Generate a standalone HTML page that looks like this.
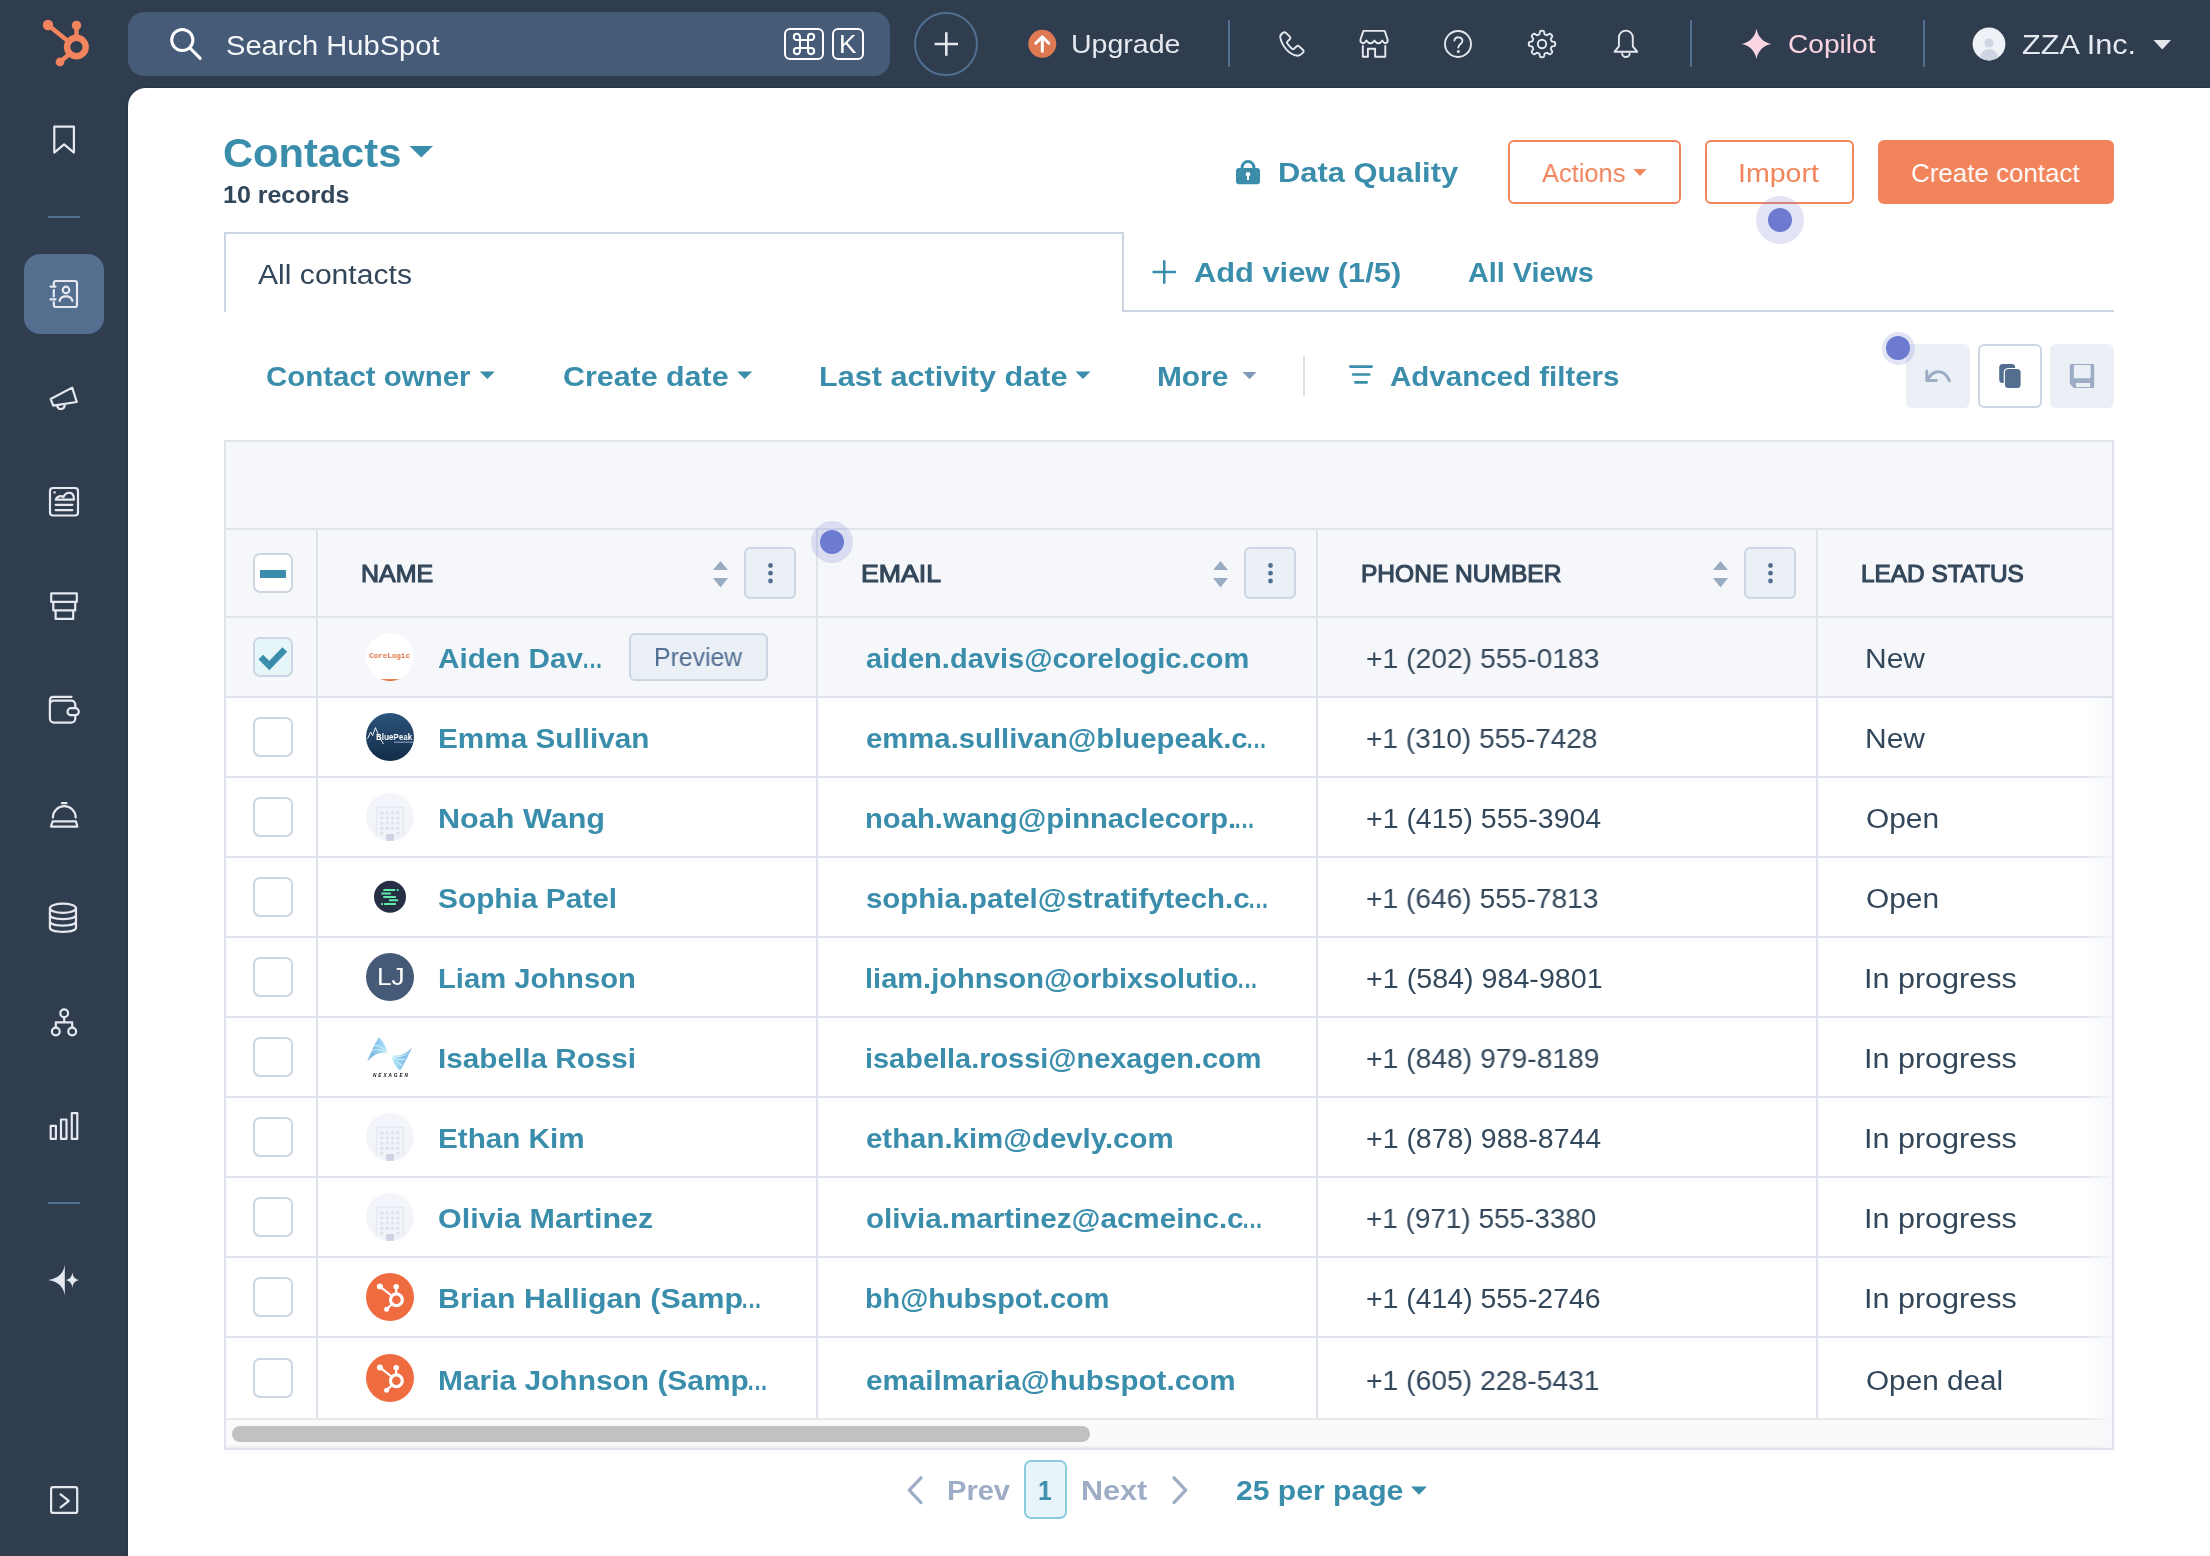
<!DOCTYPE html>
<html lang="en"><head><meta charset="utf-8"><title>Contacts</title>
<style>
html,body{margin:0;padding:0}
body{width:2210px;height:1556px;position:relative;overflow:hidden;background:#303d4f;font-family:"Liberation Sans",sans-serif}
.t{position:absolute;white-space:nowrap;line-height:1;transform-origin:0 0;will-change:transform}
.a{position:absolute;box-sizing:border-box}
svg{position:absolute;left:0;top:0;overflow:visible}
</style></head><body>
<div class="a" style="left:128px;top:88px;width:2082px;height:1468px;background:#fff;border-top-left-radius:18px;box-shadow:0 0 2px rgba(10,20,35,.5)"></div>
<div class="a" style="left:128px;top:12px;width:762px;height:64px;background:#465b77;border-radius:16px"></div>
<div class="a" style="left:784px;top:28px;width:40px;height:32px;border:2px solid #fff;border-radius:6px"></div>
<div class="a" style="left:832px;top:28px;width:32px;height:32px;border:2px solid #fff;border-radius:6px"></div>
<div class="a" style="left:914px;top:12px;width:64px;height:64px;border:2px solid #516f90;border-radius:50%"></div>
<div class="a" style="left:1228px;top:20px;width:2px;height:47px;background:#516f90"></div>
<div class="a" style="left:1690px;top:20px;width:2px;height:47px;background:#516f90"></div>
<div class="a" style="left:1923px;top:20px;width:2px;height:47px;background:#516f90"></div>
<div class="a" style="left:48px;top:216px;width:32px;height:2px;background:#516f90"></div>
<div class="a" style="left:48px;top:1202px;width:32px;height:2px;background:#516f90"></div>
<div class="a" style="left:24px;top:254px;width:80px;height:80px;background:#546e90;border-radius:16px"></div>
<div class="a" style="left:1508px;top:140px;width:173px;height:64px;border:2px solid #f2845c;border-radius:6px;background:#fff"></div>
<div class="a" style="left:1705px;top:140px;width:149px;height:64px;border:2px solid #f2845c;border-radius:6px;background:#fff"></div>
<div class="a" style="left:1878px;top:140px;width:236px;height:64px;background:#f2845c;border-radius:6px"></div>
<div class="a" style="left:224px;top:232px;width:900px;height:80px;border:2px solid #cbd6e2;border-bottom:none"></div>
<div class="a" style="left:1122px;top:310px;width:992px;height:2px;background:#cbd6e2"></div>
<div class="a" style="left:1303px;top:356px;width:2px;height:40px;background:#dde1eb"></div>
<div class="a" style="left:1906px;top:344px;width:64px;height:64px;background:#ebf0f7;border-radius:6px"></div>
<div class="a" style="left:1978px;top:344px;width:64px;height:64px;background:#fff;border:2px solid #cbd6e2;border-radius:6px"></div>
<div class="a" style="left:2050px;top:344px;width:64px;height:64px;background:#ebf0f7;border-radius:6px"></div>
<div class="a" style="left:224px;top:440px;width:1890px;height:1010px;background:#f6f7fa;border:2px solid #dfe3eb"></div>
<div class="a" style="left:226px;top:618px;width:1886px;height:800px;background:#fff"></div>
<div class="a" style="left:226px;top:618px;width:1886px;height:78px;background:#f6f7fa"></div>
<div class="a" style="left:226px;top:1420px;width:1886px;height:28px;background:#fafafa;border-bottom:2px solid #efefef"></div>
<div class="a" style="left:226px;top:528px;width:1886px;height:2px;background:#dfe3eb"></div>
<div class="a" style="left:226px;top:616px;width:1886px;height:2px;background:#dfe3eb"></div>
<div class="a" style="left:226px;top:696px;width:1886px;height:2px;background:#dfe3eb"></div>
<div class="a" style="left:226px;top:776px;width:1886px;height:2px;background:#dfe3eb"></div>
<div class="a" style="left:226px;top:856px;width:1886px;height:2px;background:#dfe3eb"></div>
<div class="a" style="left:226px;top:936px;width:1886px;height:2px;background:#dfe3eb"></div>
<div class="a" style="left:226px;top:1016px;width:1886px;height:2px;background:#dfe3eb"></div>
<div class="a" style="left:226px;top:1096px;width:1886px;height:2px;background:#dfe3eb"></div>
<div class="a" style="left:226px;top:1176px;width:1886px;height:2px;background:#dfe3eb"></div>
<div class="a" style="left:226px;top:1256px;width:1886px;height:2px;background:#dfe3eb"></div>
<div class="a" style="left:226px;top:1336px;width:1886px;height:2px;background:#dfe3eb"></div>
<div class="a" style="left:226px;top:1418px;width:1886px;height:2px;background:#e8e8e8"></div>
<div class="a" style="left:316px;top:530px;width:2px;height:888px;background:#dfe3eb"></div>
<div class="a" style="left:816px;top:530px;width:2px;height:888px;background:#dfe3eb"></div>
<div class="a" style="left:1316px;top:530px;width:2px;height:888px;background:#dfe3eb"></div>
<div class="a" style="left:1816px;top:530px;width:2px;height:888px;background:#dfe3eb"></div>
<div class="a" style="left:2084px;top:698px;width:28px;height:750px;background:linear-gradient(to right,rgba(246,248,251,0),rgba(246,248,251,1))"></div>
<div class="a" style="left:232px;top:1426px;width:858px;height:16px;background:#c1c1c1;border-radius:8px"></div>
<div class="a" style="left:253px;top:553px;width:40px;height:40px;background:#fff;border:2px solid #cbd6e2;border-radius:7px"></div>
<div class="a" style="left:253px;top:637px;width:40px;height:40px;background:#e5f5f8;border:2px solid #cbd6e2;border-radius:7px"></div>
<div class="a" style="left:253px;top:717px;width:40px;height:40px;background:#fff;border:2px solid #cbd6e2;border-radius:7px"></div>
<div class="a" style="left:253px;top:797px;width:40px;height:40px;background:#fff;border:2px solid #cbd6e2;border-radius:7px"></div>
<div class="a" style="left:253px;top:877px;width:40px;height:40px;background:#fff;border:2px solid #cbd6e2;border-radius:7px"></div>
<div class="a" style="left:253px;top:957px;width:40px;height:40px;background:#fff;border:2px solid #cbd6e2;border-radius:7px"></div>
<div class="a" style="left:253px;top:1037px;width:40px;height:40px;background:#fff;border:2px solid #cbd6e2;border-radius:7px"></div>
<div class="a" style="left:253px;top:1117px;width:40px;height:40px;background:#fff;border:2px solid #cbd6e2;border-radius:7px"></div>
<div class="a" style="left:253px;top:1197px;width:40px;height:40px;background:#fff;border:2px solid #cbd6e2;border-radius:7px"></div>
<div class="a" style="left:253px;top:1277px;width:40px;height:40px;background:#fff;border:2px solid #cbd6e2;border-radius:7px"></div>
<div class="a" style="left:253px;top:1358px;width:40px;height:40px;background:#fff;border:2px solid #cbd6e2;border-radius:7px"></div>
<div class="a" style="left:744px;top:547px;width:52px;height:52px;background:#eaf0f6;border:2px solid #cbd6e2;border-radius:6px"></div>
<div class="a" style="left:1244px;top:547px;width:52px;height:52px;background:#eaf0f6;border:2px solid #cbd6e2;border-radius:6px"></div>
<div class="a" style="left:1744px;top:547px;width:52px;height:52px;background:#eaf0f6;border:2px solid #cbd6e2;border-radius:6px"></div>
<div class="a" style="left:629px;top:633px;width:139px;height:48px;background:#eaf0f6;border:2px solid #cbd6e2;border-radius:6px"></div>
<div class="a" style="left:1024px;top:1460px;width:43px;height:59px;background:#e7f4f9;border:2px solid #8ccbdb;border-radius:7px"></div>
<div class="a" style="left:1755.5px;top:195.5px;width:48px;height:48px;background:rgba(108,122,208,.2);border-radius:50%"></div>
<div class="a" style="left:1767.5px;top:207.5px;width:24px;height:24px;background:#6c7ad0;border-radius:50%"></div>
<div class="a" style="left:1881.5px;top:331.5px;width:33.0px;height:33.0px;background:rgba(108,122,208,.2);border-radius:50%"></div>
<div class="a" style="left:1886px;top:336px;width:24px;height:24px;background:#6c7ad0;border-radius:50%"></div>
<div class="a" style="left:811px;top:521px;width:42px;height:42px;background:rgba(108,122,208,.2);border-radius:50%"></div>
<div class="a" style="left:820px;top:530px;width:24px;height:24px;background:#6c7ad0;border-radius:50%"></div>
<svg width="2210" height="1556" viewBox="0 0 2210 1556" fill="none">
<g stroke="#f2855e" fill="none"><circle cx="76.4" cy="47" r="9.3" stroke-width="6.4"/><path d="M76.5 25.4V38M48 25L68.5 41.5M60 62L69.5 54" stroke-width="4.3"/></g>
<g fill="#f2855e"><circle cx="76.5" cy="25.4" r="4.7"/><circle cx="48" cy="25" r="5.2"/><circle cx="60" cy="62" r="4.4"/></g>
<g stroke="#fff" stroke-width="3" stroke-linecap="round"><circle cx="182.3" cy="40" r="10.6"/><path d="M190.2 48.2L200.2 58.4"/></g>
<path stroke="#fff" stroke-width="2" d="M800 40H808V48H800ZM800 40V36.9A3.1 3.1 0 1 0 796.9 40ZM808 40H811.1A3.1 3.1 0 1 0 808 36.9ZM808 48V51.1A3.1 3.1 0 1 0 811.1 48ZM800 48H796.9A3.1 3.1 0 1 0 800 51.1Z"/>
<path stroke="#e5e8ef" stroke-width="2.6" d="M934.6 44H958M946.3 32.3V55.7"/>
<circle cx="1042.3" cy="43.8" r="14" fill="#de7954"/><path stroke="#fff" stroke-width="3" stroke-linecap="round" stroke-linejoin="round" d="M1042.3 51.3V37.2M1035.8 43.3L1042.3 36.8L1048.8 43.3"/>
<path stroke="#e5e8ef" stroke-width="1.9" stroke-linecap="round" stroke-linejoin="round" d="M1283.2 32.6Q1284.6 31.6 1286 32.9L1289.8 36.6Q1291 37.8 1289.9 39L1287.4 41.6Q1286.5 42.5 1287.3 43.5Q1289.5 46.5 1292 48.7Q1293 49.6 1294 48.8L1296.8 46.2Q1298 45.1 1299.2 46.3L1303 50Q1304.3 51.3 1303.1 52.5Q1300.5 55.5 1297.5 55.7C1290 55 1282 47 1280.2 37.2Q1280 34.8 1283.2 32.6Z"/>
<path stroke="#e5e8ef" stroke-width="1.9" stroke-linecap="round" stroke-linejoin="round" d="M1363.4 30.9H1384.7L1387.6 39.5V41.6Q1385 45.4 1382.4 40.6Q1378.4 46 1374.4 40.6Q1370.4 46 1366.4 40.6Q1363.6 45.4 1360.5 41.6V39.5ZM1362.8 45.9V56.7H1367.9V48.8H1375.1V56.7H1385.3V45.9"/>
<circle cx="1458" cy="44" r="13" stroke="#e5e8ef" stroke-width="1.9" stroke-linecap="round" stroke-linejoin="round"/><path stroke="#e5e8ef" stroke-width="1.9" stroke-linecap="round" stroke-linejoin="round" d="M1454.4 40.6C1454.4 36.2 1462.4 36.2 1462.4 40.8C1462.4 44.2 1458.3 43.8 1458.3 47.6"/><circle cx="1458.3" cy="51.6" r="1.5" fill="#e5e8ef"/>
<path stroke="#e5e8ef" stroke-width="1.9" stroke-linecap="round" stroke-linejoin="round" d="M1555.20 44.00L1555.19 44.35L1555.17 44.69L1555.12 45.03L1555.03 45.37L1554.84 45.69L1554.45 45.97L1553.76 46.18L1552.89 46.32L1552.20 46.45L1551.81 46.63L1551.59 46.84L1551.45 47.07L1551.35 47.31L1551.25 47.55L1551.15 47.79L1551.05 48.03L1550.95 48.27L1550.86 48.51L1550.79 48.77L1550.79 49.08L1550.95 49.48L1551.34 50.07L1551.86 50.78L1552.20 51.41L1552.27 51.88L1552.18 52.24L1552.01 52.55L1551.80 52.82L1551.57 53.08L1551.33 53.33L1551.08 53.57L1550.82 53.80L1550.55 54.01L1550.24 54.18L1549.88 54.27L1549.41 54.20L1548.78 53.86L1548.07 53.34L1547.48 52.95L1547.08 52.79L1546.77 52.79L1546.51 52.86L1546.27 52.95L1546.03 53.05L1545.79 53.15L1545.55 53.25L1545.31 53.35L1545.07 53.45L1544.84 53.59L1544.63 53.81L1544.45 54.20L1544.32 54.89L1544.18 55.76L1543.97 56.45L1543.69 56.84L1543.37 57.03L1543.03 57.12L1542.69 57.17L1542.35 57.19L1542.00 57.20L1541.65 57.19L1541.31 57.17L1540.97 57.12L1540.63 57.03L1540.31 56.84L1540.03 56.45L1539.82 55.76L1539.68 54.89L1539.55 54.20L1539.37 53.81L1539.16 53.59L1538.93 53.45L1538.69 53.35L1538.45 53.25L1538.21 53.15L1537.97 53.05L1537.73 52.95L1537.49 52.86L1537.23 52.79L1536.92 52.79L1536.52 52.95L1535.93 53.34L1535.22 53.86L1534.59 54.20L1534.12 54.27L1533.76 54.18L1533.45 54.01L1533.18 53.80L1532.92 53.57L1532.67 53.33L1532.43 53.08L1532.20 52.82L1531.99 52.55L1531.82 52.24L1531.73 51.88L1531.80 51.41L1532.14 50.78L1532.66 50.07L1533.05 49.48L1533.21 49.08L1533.21 48.77L1533.14 48.51L1533.05 48.27L1532.95 48.03L1532.85 47.79L1532.75 47.55L1532.65 47.31L1532.55 47.07L1532.41 46.84L1532.19 46.63L1531.80 46.45L1531.11 46.32L1530.24 46.18L1529.55 45.97L1529.16 45.69L1528.97 45.37L1528.88 45.03L1528.83 44.69L1528.81 44.35L1528.80 44.00L1528.81 43.65L1528.83 43.31L1528.88 42.97L1528.97 42.63L1529.16 42.31L1529.55 42.03L1530.24 41.82L1531.11 41.68L1531.80 41.55L1532.19 41.37L1532.41 41.16L1532.55 40.93L1532.65 40.69L1532.75 40.45L1532.85 40.21L1532.95 39.97L1533.05 39.73L1533.14 39.49L1533.21 39.23L1533.21 38.92L1533.05 38.52L1532.66 37.93L1532.14 37.22L1531.80 36.59L1531.73 36.12L1531.82 35.76L1531.99 35.45L1532.20 35.18L1532.43 34.92L1532.67 34.67L1532.92 34.43L1533.18 34.20L1533.45 33.99L1533.76 33.82L1534.12 33.73L1534.59 33.80L1535.22 34.14L1535.93 34.66L1536.52 35.05L1536.92 35.21L1537.23 35.21L1537.49 35.14L1537.73 35.05L1537.97 34.95L1538.21 34.85L1538.45 34.75L1538.69 34.65L1538.93 34.55L1539.16 34.41L1539.37 34.19L1539.55 33.80L1539.68 33.11L1539.82 32.24L1540.03 31.55L1540.31 31.16L1540.63 30.97L1540.97 30.88L1541.31 30.83L1541.65 30.81L1542.00 30.80L1542.35 30.81L1542.69 30.83L1543.03 30.88L1543.37 30.97L1543.69 31.16L1543.97 31.55L1544.18 32.24L1544.32 33.11L1544.45 33.80L1544.63 34.19L1544.84 34.41L1545.07 34.55L1545.31 34.65L1545.55 34.75L1545.79 34.85L1546.03 34.95L1546.27 35.05L1546.51 35.14L1546.77 35.21L1547.08 35.21L1547.48 35.05L1548.07 34.66L1548.78 34.14L1549.41 33.80L1549.88 33.73L1550.24 33.82L1550.55 33.99L1550.82 34.20L1551.08 34.43L1551.33 34.67L1551.57 34.92L1551.80 35.18L1552.01 35.45L1552.18 35.76L1552.27 36.12L1552.20 36.59L1551.86 37.22L1551.34 37.93L1550.95 38.52L1550.79 38.92L1550.79 39.23L1550.86 39.49L1550.95 39.73L1551.05 39.97L1551.15 40.21L1551.25 40.45L1551.35 40.69L1551.45 40.93L1551.59 41.16L1551.81 41.37L1552.20 41.55L1552.89 41.68L1553.76 41.82L1554.45 42.03L1554.84 42.31L1555.03 42.63L1555.12 42.97L1555.17 43.31L1555.19 43.65Z"/><circle cx="1542" cy="44" r="4.2" stroke="#e5e8ef" stroke-width="1.9" stroke-linecap="round" stroke-linejoin="round"/>
<path stroke="#e5e8ef" stroke-width="1.9" stroke-linecap="round" stroke-linejoin="round" d="M1618.9 46.3V37.6A6.95 6.95 0 0 1 1632.8 37.6V46.3L1637.2 51.7H1614.6ZM1622.2 53.8A3.7 3.2 0 0 0 1629.6 53.8"/>
<path fill="#f9d6e2" d="M1756.5 28.8C1758 37 1763.3 42.5 1771.3 44C1763.3 45.5 1758 51 1756.5 59C1755 51 1749.7 45.5 1741.7 44C1749.7 42.5 1755 37 1756.5 28.8Z"/>
<clipPath id="av"><circle cx="1989" cy="44" r="16.4"/></clipPath><circle cx="1989" cy="44" r="16.4" fill="#eef1f6"/><g clip-path="url(#av)" fill="#cdd5e2"><circle cx="1989" cy="43" r="4.5"/><path d="M1979.5 62C1979.5 52.5 1983.5 49.2 1989 49.2C1994.5 49.2 1998.5 52.5 1998.5 62Z"/></g>
<path fill="#e5e8ef" d="M2153.5 40H2171L2162.25 49.5Z"/>
<path stroke="#e5e8ef" stroke-width="2.2" stroke-linecap="round" stroke-linejoin="round" stroke-linejoin="miter" d="M54.3 126.6H73.9V152.6L64.1 144.3L54.3 152.6Z"/>
<path stroke="#e5e8ef" stroke-width="2.2" stroke-linecap="round" stroke-linejoin="round" d="M53.8 285V283A2 2 0 0 1 55.8 281H75A2 2 0 0 1 77 283V305A2 2 0 0 1 75 307H55.8A2 2 0 0 1 53.8 305V302M53.8 290V296.5M50.5 286.6H55.5M50.5 299.4H55.5"/><circle cx="66" cy="290" r="3.3" stroke="#e5e8ef" stroke-width="2.2" stroke-linecap="round" stroke-linejoin="round"/><path stroke="#e5e8ef" stroke-width="2.2" stroke-linecap="round" stroke-linejoin="round" d="M59.6 301C60.5 294.8 71.5 294.8 72.4 301"/>
<path stroke="#e5e8ef" stroke-width="2.2" stroke-linecap="round" stroke-linejoin="round" d="M50.7 399L72.2 387.6L76.8 402L53.2 405.6ZM57.3 405.4C57.3 410.2 64.3 410.6 64.9 404.3"/>
<rect x="50" y="488" width="28" height="27.5" rx="3" stroke="#e5e8ef" stroke-width="2.2" stroke-linecap="round" stroke-linejoin="round"/><circle cx="54.6" cy="492.4" r="1.2" fill="#e5e8ef"/><path stroke="#e5e8ef" stroke-width="2.2" stroke-linecap="round" stroke-linejoin="round" stroke-width="2" d="M55.6 499.6C57 496 61 495.4 63.5 497C65 493.6 68 492.6 70 492.8C73 493.2 74 496 74 499.6ZM55.6 504.8H72.4M55.6 510.1H72.4"/>
<path stroke="#e5e8ef" stroke-width="2.2" stroke-linecap="round" stroke-linejoin="round" stroke-linejoin="miter" d="M51.2 593.3H76.8V601.8H51.2ZM53.3 601.8H75.2V610.4H53.3ZM55.6 610.4H73.2V618.9H55.6Z"/>
<rect x="49.9" y="700.6" width="25.4" height="22" rx="4" stroke="#e5e8ef" stroke-width="2.2" stroke-linecap="round" stroke-linejoin="round"/><path stroke="#e5e8ef" stroke-width="2.2" stroke-linecap="round" stroke-linejoin="round" d="M49.9 704V700A3.4 3.4 0 0 1 53.3 696.8H71.5"/><rect x="67.5" y="708.2" width="11.3" height="7" rx="3.5" fill="#303d4f" stroke="#e5e8ef" stroke-width="2.2" stroke-linecap="round" stroke-linejoin="round"/>
<path stroke="#e5e8ef" stroke-width="2.2" stroke-linecap="round" stroke-linejoin="round" d="M62 803.2H66.5M52.9 817.6A11.4 11.4 0 0 1 75.7 817.6M52.6 821.3H75.9L77.4 826.6H51Z"/>
<path stroke="#e5e8ef" stroke-width="2.2" stroke-linecap="round" stroke-linejoin="round" d="M49.9 908.3V927.5C49.9 933.3 76 933.3 76 927.5V908.3M49.9 914.8C49.9 920.5 76 920.5 76 914.8M49.9 921.2C49.9 927 76 927 76 921.2"/><ellipse cx="62.95" cy="908.3" rx="13.05" ry="4.6" stroke="#e5e8ef" stroke-width="2.2" stroke-linecap="round" stroke-linejoin="round"/>
<g stroke="#e5e8ef" stroke-width="2.2" stroke-linecap="round" stroke-linejoin="round"><circle cx="64.2" cy="1013.2" r="3.9"/><circle cx="55.8" cy="1031.5" r="3.9"/><circle cx="72.2" cy="1031.5" r="3.9"/><path d="M64.2 1017.2V1022.4M55.8 1027.5V1022.4H72.2V1027.5"/></g>
<path stroke="#e5e8ef" stroke-width="2.2" stroke-linecap="round" stroke-linejoin="round" stroke-linejoin="miter" d="M50.7 1125.9H55.9V1138.9H50.7ZM61 1119.5H66.5V1138.9H61ZM71.8 1113.1H77.3V1138.9H71.8Z"/>
<path fill="#e5e8ef" d="M64.8 1264.5V1295.7C63.8 1287 58 1281.6 48 1280.1C58 1278.6 63.8 1273.2 64.8 1264.5ZM72.4 1272.2C73 1277 75 1279.3 79.6 1280.1C75 1280.9 73 1283.2 72.4 1288C71.8 1283.2 69.8 1280.9 65.2 1280.1C69.8 1279.3 71.8 1277 72.4 1272.2Z"/>
<rect x="51.1" y="1487.1" width="26.1" height="25.8" rx="2" stroke="#e5e8ef" stroke-width="2.2" stroke-linecap="round" stroke-linejoin="round"/><path stroke="#e5e8ef" stroke-width="2.2" stroke-linecap="round" stroke-linejoin="round" stroke-width="2.4" d="M60.6 1494.3L68.8 1500.8L60.6 1507.3"/>
<path fill="#3a8eac" d="M409.5 146H433L421.25 157.6Z"/>
<rect x="1236" y="168" width="24" height="16.2" rx="3" fill="#3a8eac"/><path stroke="#3a8eac" stroke-width="3" d="M1242.1 169V167.4A5.9 5.9 0 0 1 1253.9 167.4V169"/><circle cx="1248" cy="174.2" r="2.2" fill="#fff"/><rect x="1247" y="175" width="2" height="5" fill="#fff"/>
<path fill="#f2845c" d="M1633.5 169H1646.5L1640 176Z"/>
<path stroke="#3a8eac" stroke-width="2.5" d="M1152.5 272H1176M1164.25 260.2V283.8"/>
<path fill="#3a8eac" d="M479.8 371.5H494.8L487.3 379Z"/>
<path fill="#3a8eac" d="M737.2 371.5H752.2L744.7 379Z"/>
<path fill="#3a8eac" d="M1075.5 371.5H1090.5L1083.0 379Z"/>
<path fill="#7f9ab8" d="M1242.5 372H1256.5L1249.5 379.2Z"/>
<path stroke="#3a8eac" stroke-width="2.6" stroke-linecap="round" d="M1350.3 366.6H1371.7M1353 374.5H1369.3M1355.3 382.4H1366.7"/>
<path stroke="#9bacc4" stroke-width="3" stroke-linecap="round" stroke-linejoin="round" d="M1926.8 371V380.4H1936.3M1927.5 380C1933 368.5 1944.5 369 1949.3 380.6"/>
<rect x="1999.2" y="363.9" width="16" height="19.2" rx="3.5" fill="#546e8f"/><rect x="2003.7" y="367.9" width="18" height="21.3" rx="4.5" fill="#fff"/><rect x="2004.9" y="369.1" width="15.7" height="19" rx="3.5" fill="#546e8f"/>
<path fill="#9bacc4" d="M2069.8 365.4A1.5 1.5 0 0 1 2071.3 363.9H2092.7A1.5 1.5 0 0 1 2094.2 365.4V386.6A1.5 1.5 0 0 1 2092.7 388.1H2073.8L2069.8 384.1Z"/><rect x="2073.9" y="365" width="16.8" height="13.3" rx="1" fill="#ebf0f7"/><rect x="2076" y="383" width="14.1" height="4" fill="#ebf0f7"/>
<rect x="260" y="570" width="26" height="8" fill="#3a8eac"/>
<path stroke="#3a8eac" stroke-width="6.5" d="M260.8 657L269.3 665.6L284.8 649.5"/>
<path fill="#99acc2" d="M713 570L720.5 561L728 570ZM713 578H728L720.5 587.5Z"/>
<g fill="#516f90"><circle cx="770.5" cy="565.5" r="2.4"/><circle cx="770.5" cy="573.2" r="2.4"/><circle cx="770.5" cy="581" r="2.4"/></g>
<path fill="#99acc2" d="M1213 570L1220.5 561L1228 570ZM1213 578H1228L1220.5 587.5Z"/>
<g fill="#516f90"><circle cx="1270.5" cy="565.5" r="2.4"/><circle cx="1270.5" cy="573.2" r="2.4"/><circle cx="1270.5" cy="581" r="2.4"/></g>
<path fill="#99acc2" d="M1713 570L1720.5 561L1728 570ZM1713 578H1728L1720.5 587.5Z"/>
<g fill="#516f90"><circle cx="1770.5" cy="565.5" r="2.4"/><circle cx="1770.5" cy="573.2" r="2.4"/><circle cx="1770.5" cy="581" r="2.4"/></g>
<path stroke="#9dadc5" stroke-width="3.2" stroke-linecap="round" stroke-linejoin="round" d="M921 1477.8L909.3 1490.2L921 1502.6M1174 1477.8L1185.7 1490.2L1174 1502.6"/>
<path fill="#3a8eac" d="M1411 1486.4H1427L1419 1494.8Z"/>
<clipPath id="c0"><circle cx="390" cy="657" r="24"/></clipPath><circle cx="390" cy="657" r="24" fill="#fff"/><rect x="366" y="679.2" width="48" height="3" fill="#e2632f" clip-path="url(#c0)"/>
<linearGradient id="bp" x1="0" y1="0" x2="0" y2="1"><stop offset="0" stop-color="#2b547c"/><stop offset="1" stop-color="#132c49"/></linearGradient><circle cx="390" cy="737" r="24" fill="url(#bp)"/><path stroke="#fff" stroke-width=".9" d="M367.6 738.6L370.6 732L372.6 735.6L375.4 727.6L378.2 734.4L380 738L383.4 744"/><rect x="394" y="741.5" width="19" height="1.5" fill="#6f88a6"/>
<clipPath id="c2"><circle cx="390" cy="817" r="24"/></clipPath><circle cx="390" cy="817" r="24" fill="#f3f5fa"/><g clip-path="url(#c2)"><rect x="376.3" y="807.3" width="27.2" height="40" fill="#f1f3f9" stroke="#e3e7f0" stroke-width="1"/><rect x="380.4" y="811.6" width="2.9" height="2.9" rx=".5" fill="#dce1ec"/><rect x="385.8" y="811.6" width="2.9" height="2.9" rx=".5" fill="#dce1ec"/><rect x="391.1" y="811.6" width="2.9" height="2.9" rx=".5" fill="#dce1ec"/><rect x="396.4" y="811.6" width="2.9" height="2.9" rx=".5" fill="#dce1ec"/><rect x="380.4" y="816.7" width="2.9" height="2.9" rx=".5" fill="#dce1ec"/><rect x="385.8" y="816.7" width="2.9" height="2.9" rx=".5" fill="#dce1ec"/><rect x="391.1" y="816.7" width="2.9" height="2.9" rx=".5" fill="#dce1ec"/><rect x="396.4" y="816.7" width="2.9" height="2.9" rx=".5" fill="#dce1ec"/><rect x="380.4" y="821.7" width="2.9" height="2.9" rx=".5" fill="#dce1ec"/><rect x="385.8" y="821.7" width="2.9" height="2.9" rx=".5" fill="#dce1ec"/><rect x="391.1" y="821.7" width="2.9" height="2.9" rx=".5" fill="#dce1ec"/><rect x="396.4" y="821.7" width="2.9" height="2.9" rx=".5" fill="#dce1ec"/><rect x="380.4" y="826.8" width="2.9" height="2.9" rx=".5" fill="#dce1ec"/><rect x="385.8" y="826.8" width="2.9" height="2.9" rx=".5" fill="#dce1ec"/><rect x="391.1" y="826.8" width="2.9" height="2.9" rx=".5" fill="#dce1ec"/><rect x="396.4" y="826.8" width="2.9" height="2.9" rx=".5" fill="#dce1ec"/><rect x="380.4" y="831.9" width="2.9" height="2.9" rx=".5" fill="#dce1ec"/><rect x="396.4" y="831.9" width="2.9" height="2.9" rx=".5" fill="#dce1ec"/><rect x="386" y="834" width="8" height="8" fill="#cdd4e1"/></g>
<circle cx="390" cy="896.8" r="16" fill="#272f45"/><g fill="#5eeaa8"><rect x="383.3" y="889.1" width="12" height="2" rx=".5"/><rect x="396.8" y="889.1" width="1.8" height="2"/><rect x="381.3" y="892.6" width="9.6" height="2" rx=".5"/><rect x="383.2" y="896" width="12.8" height="2" rx=".5"/><rect x="389" y="899.3" width="9.1" height="2" rx=".5"/><rect x="381.2" y="903" width="1.8" height="2"/><rect x="384" y="903" width="12" height="2" rx=".5"/></g>
<circle cx="390" cy="977" r="24" fill="#455a77"/>
<linearGradient id="nx" x1="0" y1="0" x2="1" y2="0"><stop offset="0" stop-color="#5b9fe0"/><stop offset="1" stop-color="#9be4f5"/></linearGradient><linearGradient id="nx2" x1="1" y1="0" x2="0" y2="0"><stop offset="0" stop-color="#5b9fe0"/><stop offset="1" stop-color="#9be4f5"/></linearGradient><path fill="url(#nx)" opacity=".85" d="M378.8 1037.2C382.5 1040 386 1046 387.6 1053.6C383 1051.5 375 1052.5 367.2 1061.6C370.5 1053 374.5 1044 378.8 1037.2Z"/><path fill="url(#nx2)" opacity=".85" d="M412 1047.6C408 1056 404.5 1064 400.4 1070.5C396 1068 393 1062 391.6 1055C396.5 1057 405 1055.5 412 1047.6Z"/><path stroke="#fff" stroke-width=".9" opacity=".7" d="M373.5 1045.5C379 1045 384 1048 387 1053M371 1051C377 1048.5 383 1050 387.3 1053.4M409 1052.5C404 1056.5 397 1057.5 392 1055.2M405.5 1059C400.5 1060.5 395.5 1059 392 1055.6M402.5 1065C398.5 1064 394.5 1060.5 392.2 1056"/>
<clipPath id="c6"><circle cx="390" cy="1137" r="24"/></clipPath><circle cx="390" cy="1137" r="24" fill="#f3f5fa"/><g clip-path="url(#c6)"><rect x="376.3" y="1127.3" width="27.2" height="40" fill="#f1f3f9" stroke="#e3e7f0" stroke-width="1"/><rect x="380.4" y="1131.6" width="2.9" height="2.9" rx=".5" fill="#dce1ec"/><rect x="385.8" y="1131.6" width="2.9" height="2.9" rx=".5" fill="#dce1ec"/><rect x="391.1" y="1131.6" width="2.9" height="2.9" rx=".5" fill="#dce1ec"/><rect x="396.4" y="1131.6" width="2.9" height="2.9" rx=".5" fill="#dce1ec"/><rect x="380.4" y="1136.7" width="2.9" height="2.9" rx=".5" fill="#dce1ec"/><rect x="385.8" y="1136.7" width="2.9" height="2.9" rx=".5" fill="#dce1ec"/><rect x="391.1" y="1136.7" width="2.9" height="2.9" rx=".5" fill="#dce1ec"/><rect x="396.4" y="1136.7" width="2.9" height="2.9" rx=".5" fill="#dce1ec"/><rect x="380.4" y="1141.7" width="2.9" height="2.9" rx=".5" fill="#dce1ec"/><rect x="385.8" y="1141.7" width="2.9" height="2.9" rx=".5" fill="#dce1ec"/><rect x="391.1" y="1141.7" width="2.9" height="2.9" rx=".5" fill="#dce1ec"/><rect x="396.4" y="1141.7" width="2.9" height="2.9" rx=".5" fill="#dce1ec"/><rect x="380.4" y="1146.8" width="2.9" height="2.9" rx=".5" fill="#dce1ec"/><rect x="385.8" y="1146.8" width="2.9" height="2.9" rx=".5" fill="#dce1ec"/><rect x="391.1" y="1146.8" width="2.9" height="2.9" rx=".5" fill="#dce1ec"/><rect x="396.4" y="1146.8" width="2.9" height="2.9" rx=".5" fill="#dce1ec"/><rect x="380.4" y="1151.9" width="2.9" height="2.9" rx=".5" fill="#dce1ec"/><rect x="396.4" y="1151.9" width="2.9" height="2.9" rx=".5" fill="#dce1ec"/><rect x="386" y="1154" width="8" height="8" fill="#cdd4e1"/></g>
<clipPath id="c7"><circle cx="390" cy="1217" r="24"/></clipPath><circle cx="390" cy="1217" r="24" fill="#f3f5fa"/><g clip-path="url(#c7)"><rect x="376.3" y="1207.3" width="27.2" height="40" fill="#f1f3f9" stroke="#e3e7f0" stroke-width="1"/><rect x="380.4" y="1211.6" width="2.9" height="2.9" rx=".5" fill="#dce1ec"/><rect x="385.8" y="1211.6" width="2.9" height="2.9" rx=".5" fill="#dce1ec"/><rect x="391.1" y="1211.6" width="2.9" height="2.9" rx=".5" fill="#dce1ec"/><rect x="396.4" y="1211.6" width="2.9" height="2.9" rx=".5" fill="#dce1ec"/><rect x="380.4" y="1216.7" width="2.9" height="2.9" rx=".5" fill="#dce1ec"/><rect x="385.8" y="1216.7" width="2.9" height="2.9" rx=".5" fill="#dce1ec"/><rect x="391.1" y="1216.7" width="2.9" height="2.9" rx=".5" fill="#dce1ec"/><rect x="396.4" y="1216.7" width="2.9" height="2.9" rx=".5" fill="#dce1ec"/><rect x="380.4" y="1221.7" width="2.9" height="2.9" rx=".5" fill="#dce1ec"/><rect x="385.8" y="1221.7" width="2.9" height="2.9" rx=".5" fill="#dce1ec"/><rect x="391.1" y="1221.7" width="2.9" height="2.9" rx=".5" fill="#dce1ec"/><rect x="396.4" y="1221.7" width="2.9" height="2.9" rx=".5" fill="#dce1ec"/><rect x="380.4" y="1226.8" width="2.9" height="2.9" rx=".5" fill="#dce1ec"/><rect x="385.8" y="1226.8" width="2.9" height="2.9" rx=".5" fill="#dce1ec"/><rect x="391.1" y="1226.8" width="2.9" height="2.9" rx=".5" fill="#dce1ec"/><rect x="396.4" y="1226.8" width="2.9" height="2.9" rx=".5" fill="#dce1ec"/><rect x="380.4" y="1231.9" width="2.9" height="2.9" rx=".5" fill="#dce1ec"/><rect x="396.4" y="1231.9" width="2.9" height="2.9" rx=".5" fill="#dce1ec"/><rect x="386" y="1234" width="8" height="8" fill="#cdd4e1"/></g>
<circle cx="390" cy="1297" r="24" fill="#ef6b40"/><g stroke="#fff" fill="none"><circle cx="396.4" cy="1299.7" r="5.9" stroke-width="3.2"/><path stroke-width="2.2" d="M396.2 1286.7V1294M379.9 1286.4L392 1296M386.6 1309.2L392.4 1303.8"/></g><g fill="#fff"><circle cx="396.2" cy="1286.7" r="2.8"/><circle cx="379.9" cy="1286.4" r="3"/><circle cx="386.6" cy="1309.2" r="2.5"/></g>
<circle cx="390" cy="1378" r="24" fill="#ef6b40"/><g stroke="#fff" fill="none"><circle cx="396.4" cy="1380.7" r="5.9" stroke-width="3.2"/><path stroke-width="2.2" d="M396.2 1367.7V1375M379.9 1367.4L392 1377M386.6 1390.2L392.4 1384.8"/></g><g fill="#fff"><circle cx="396.2" cy="1367.7" r="2.8"/><circle cx="379.9" cy="1367.4" r="3"/><circle cx="386.6" cy="1390.2" r="2.5"/></g>
</svg>
<span class="t" style="left:226.45px;top:31.10px;font-size:28.4px;font-weight:400;color:#f5f8fa;transform:scaleX(1.0248);">Search HubSpot</span>
<span class="t" style="left:839.01px;top:31.80px;font-size:25px;font-weight:400;color:#ffffff;transform:scaleX(1.0481);">K</span>
<span class="t" style="left:1071.46px;top:31.00px;font-size:26.6px;font-weight:400;color:#e5e8ef;transform:scaleX(1.0734);">Upgrade</span>
<span class="t" style="left:1787.60px;top:31.00px;font-size:26.6px;font-weight:400;color:#f9d6e2;transform:scaleX(1.0564);">Copilot</span>
<span class="t" style="left:2022.13px;top:30.10px;font-size:28.4px;font-weight:400;color:#e5e8ef;transform:scaleX(1.0790);">ZZA Inc.</span>
<span class="t" style="left:223.30px;top:132.80px;font-size:41.0px;font-weight:700;color:#3a8eac;transform:scaleX(1.0169);">Contacts</span>
<span class="t" style="left:223.46px;top:182.50px;font-size:24.6px;font-weight:700;color:#33475b;transform:scaleX(1.0161);">10 records</span>
<span class="t" style="left:1278.04px;top:158.10px;font-size:28.4px;font-weight:700;color:#3a8eac;transform:scaleX(1.0870);">Data Quality</span>
<span class="t" style="left:1542.29px;top:160.00px;font-size:26.6px;font-weight:400;color:#f2845c;transform:scaleX(0.9567);">Actions</span>
<span class="t" style="left:1737.90px;top:160.00px;font-size:26.6px;font-weight:400;color:#f2845c;transform:scaleX(1.0741);">Import</span>
<span class="t" style="left:1910.91px;top:160.00px;font-size:26.6px;font-weight:400;color:#ffffff;transform:scaleX(0.9748);">Create contact</span>
<span class="t" style="left:258.48px;top:260.10px;font-size:28.4px;font-weight:400;color:#33475b;transform:scaleX(1.0605);">All contacts</span>
<span class="t" style="left:1194.13px;top:258.10px;font-size:28.4px;font-weight:700;color:#3a8eac;transform:scaleX(1.0852);">Add view (1/5)</span>
<span class="t" style="left:1467.68px;top:258.10px;font-size:28.4px;font-weight:700;color:#3a8eac;transform:scaleX(1.0138);">All Views</span>
<span class="t" style="left:265.80px;top:362.10px;font-size:28.4px;font-weight:700;color:#3a8eac;transform:scaleX(1.0376);">Contact owner</span>
<span class="t" style="left:562.96px;top:362.10px;font-size:28.4px;font-weight:700;color:#3a8eac;transform:scaleX(1.0705);">Create date</span>
<span class="t" style="left:818.55px;top:362.10px;font-size:28.4px;font-weight:700;color:#3a8eac;transform:scaleX(1.0785);">Last activity date</span>
<span class="t" style="left:1157.10px;top:362.10px;font-size:28.4px;font-weight:700;color:#3a8eac;transform:scaleX(1.0518);">More</span>
<span class="t" style="left:1390.16px;top:362.10px;font-size:28.4px;font-weight:700;color:#3a8eac;transform:scaleX(1.0390);">Advanced filters</span>
<span class="t" style="left:361.43px;top:561.80px;font-size:24px;font-weight:400;color:#33475b;transform:scaleX(1.0410);-webkit-text-stroke:1.1px #33475b;">NAME</span>
<span class="t" style="left:861.33px;top:561.80px;font-size:24px;font-weight:400;color:#33475b;transform:scaleX(1.1100);-webkit-text-stroke:1.1px #33475b;">EMAIL</span>
<span class="t" style="left:1361.46px;top:561.80px;font-size:24px;font-weight:400;color:#33475b;transform:scaleX(1.0227);-webkit-text-stroke:1.1px #33475b;">PHONE NUMBER</span>
<span class="t" style="left:1861.17px;top:561.80px;font-size:24px;font-weight:400;color:#33475b;transform:scaleX(1.0149);-webkit-text-stroke:1.1px #33475b;">LEAD STATUS</span>
<span class="t" style="left:437.96px;top:644.10px;font-size:28.4px;font-weight:700;color:#3a8eac;transform:scaleX(1.0445);">Aiden Dav</span>
<span class="t" style="left:582.43px;top:644.10px;font-size:28.4px;font-weight:700;color:#3a8eac;transform:scaleX(0.7331);">…</span>
<span class="t" style="left:866.40px;top:644.10px;font-size:28.4px;font-weight:700;color:#3a8eac;transform:scaleX(1.0226);">aiden.davis@corelogic.com</span>
<span class="t" style="left:1365.65px;top:644.10px;font-size:28.4px;font-weight:400;color:#33475b;transform:scaleX(0.9963);">+1 (202) 555-0183</span>
<span class="t" style="left:1864.58px;top:644.10px;font-size:28.4px;font-weight:400;color:#33475b;transform:scaleX(1.0560);">New</span>
<span class="t" style="left:437.91px;top:724.10px;font-size:28.4px;font-weight:700;color:#3a8eac;transform:scaleX(1.0467);">Emma Sullivan</span>
<span class="t" style="left:866.06px;top:724.10px;font-size:28.4px;font-weight:700;color:#3a8eac;transform:scaleX(1.0312);">emma.sullivan@bluepeak.c</span>
<span class="t" style="left:1246.43px;top:724.10px;font-size:28.4px;font-weight:700;color:#3a8eac;transform:scaleX(0.7331);">…</span>
<span class="t" style="left:1365.66px;top:724.10px;font-size:28.4px;font-weight:400;color:#33475b;transform:scaleX(0.9877);">+1 (310) 555-7428</span>
<span class="t" style="left:1864.58px;top:724.10px;font-size:28.4px;font-weight:400;color:#33475b;transform:scaleX(1.0560);">New</span>
<span class="t" style="left:437.85px;top:804.10px;font-size:28.4px;font-weight:700;color:#3a8eac;transform:scaleX(1.0770);">Noah Wang</span>
<span class="t" style="left:865.34px;top:804.10px;font-size:28.4px;font-weight:700;color:#3a8eac;transform:scaleX(1.0296);">noah.wang@pinnaclecorp.</span>
<span class="t" style="left:1234.43px;top:804.10px;font-size:28.4px;font-weight:700;color:#3a8eac;transform:scaleX(0.7331);">…</span>
<span class="t" style="left:1365.64px;top:804.10px;font-size:28.4px;font-weight:400;color:#33475b;transform:scaleX(1.0032);">+1 (415) 555-3904</span>
<span class="t" style="left:1865.61px;top:804.10px;font-size:28.4px;font-weight:400;color:#33475b;transform:scaleX(1.0520);">Open</span>
<span class="t" style="left:437.86px;top:884.10px;font-size:28.4px;font-weight:700;color:#3a8eac;transform:scaleX(1.0512);">Sophia Patel</span>
<span class="t" style="left:866.02px;top:884.10px;font-size:28.4px;font-weight:700;color:#3a8eac;transform:scaleX(1.0367);">sophia.patel@stratifytech.c</span>
<span class="t" style="left:1248.43px;top:884.10px;font-size:28.4px;font-weight:700;color:#3a8eac;transform:scaleX(0.7331);">…</span>
<span class="t" style="left:1365.66px;top:884.10px;font-size:28.4px;font-weight:400;color:#33475b;transform:scaleX(0.9920);">+1 (646) 555-7813</span>
<span class="t" style="left:1865.61px;top:884.10px;font-size:28.4px;font-weight:400;color:#33475b;transform:scaleX(1.0520);">Open</span>
<span class="t" style="left:437.94px;top:964.10px;font-size:28.4px;font-weight:700;color:#3a8eac;transform:scaleX(1.0279);">Liam Johnson</span>
<span class="t" style="left:865.29px;top:964.10px;font-size:28.4px;font-weight:700;color:#3a8eac;transform:scaleX(1.0223);">liam.johnson@orbixsolutio</span>
<span class="t" style="left:1237.43px;top:964.10px;font-size:28.4px;font-weight:700;color:#3a8eac;transform:scaleX(0.7331);">…</span>
<span class="t" style="left:1365.63px;top:964.10px;font-size:28.4px;font-weight:400;color:#33475b;transform:scaleX(1.0096);">+1 (584) 984-9801</span>
<span class="t" style="left:1864.20px;top:964.10px;font-size:28.4px;font-weight:400;color:#33475b;transform:scaleX(1.0756);">In progress</span>
<span class="t" style="left:437.89px;top:1044.10px;font-size:28.4px;font-weight:700;color:#3a8eac;transform:scaleX(1.0458);">Isabella Rossi</span>
<span class="t" style="left:865.30px;top:1044.10px;font-size:28.4px;font-weight:700;color:#3a8eac;transform:scaleX(1.0189);">isabella.rossi@nexagen.com</span>
<span class="t" style="left:1365.65px;top:1044.10px;font-size:28.4px;font-weight:400;color:#33475b;transform:scaleX(0.9965);">+1 (848) 979-8189</span>
<span class="t" style="left:1864.20px;top:1044.10px;font-size:28.4px;font-weight:400;color:#33475b;transform:scaleX(1.0756);">In progress</span>
<span class="t" style="left:437.91px;top:1124.10px;font-size:28.4px;font-weight:700;color:#3a8eac;transform:scaleX(1.0446);">Ethan Kim</span>
<span class="t" style="left:866.06px;top:1124.10px;font-size:28.4px;font-weight:700;color:#3a8eac;transform:scaleX(1.0357);">ethan.kim@devly.com</span>
<span class="t" style="left:1365.64px;top:1124.10px;font-size:28.4px;font-weight:400;color:#33475b;transform:scaleX(1.0032);">+1 (878) 988-8744</span>
<span class="t" style="left:1864.20px;top:1124.10px;font-size:28.4px;font-weight:400;color:#33475b;transform:scaleX(1.0756);">In progress</span>
<span class="t" style="left:437.56px;top:1204.10px;font-size:28.4px;font-weight:700;color:#3a8eac;transform:scaleX(1.0745);">Olivia Martinez</span>
<span class="t" style="left:866.05px;top:1204.10px;font-size:28.4px;font-weight:700;color:#3a8eac;transform:scaleX(1.0424);">olivia.martinez@acmeinc.c</span>
<span class="t" style="left:1242.43px;top:1204.10px;font-size:28.4px;font-weight:700;color:#3a8eac;transform:scaleX(0.7331);">…</span>
<span class="t" style="left:1365.67px;top:1204.10px;font-size:28.4px;font-weight:400;color:#33475b;transform:scaleX(0.9828);">+1 (971) 555-3380</span>
<span class="t" style="left:1864.20px;top:1204.10px;font-size:28.4px;font-weight:400;color:#33475b;transform:scaleX(1.0756);">In progress</span>
<span class="t" style="left:437.87px;top:1284.10px;font-size:28.4px;font-weight:700;color:#3a8eac;transform:scaleX(1.0681);">Brian Halligan (Samp</span>
<span class="t" style="left:741.43px;top:1284.10px;font-size:28.4px;font-weight:700;color:#3a8eac;transform:scaleX(0.7331);">…</span>
<span class="t" style="left:865.37px;top:1284.10px;font-size:28.4px;font-weight:700;color:#3a8eac;transform:scaleX(1.0156);">bh@hubspot.com</span>
<span class="t" style="left:1365.64px;top:1284.10px;font-size:28.4px;font-weight:400;color:#33475b;transform:scaleX(1.0006);">+1 (414) 555-2746</span>
<span class="t" style="left:1864.20px;top:1284.10px;font-size:28.4px;font-weight:400;color:#33475b;transform:scaleX(1.0756);">In progress</span>
<span class="t" style="left:437.90px;top:1366.10px;font-size:28.4px;font-weight:700;color:#3a8eac;transform:scaleX(1.0536);">Maria Johnson (Samp</span>
<span class="t" style="left:747.43px;top:1366.10px;font-size:28.4px;font-weight:700;color:#3a8eac;transform:scaleX(0.7331);">…</span>
<span class="t" style="left:866.05px;top:1366.10px;font-size:28.4px;font-weight:700;color:#3a8eac;transform:scaleX(1.0433);">emailmaria@hubspot.com</span>
<span class="t" style="left:1365.65px;top:1366.10px;font-size:28.4px;font-weight:400;color:#33475b;transform:scaleX(0.9966);">+1 (605) 228-5431</span>
<span class="t" style="left:1865.62px;top:1366.10px;font-size:28.4px;font-weight:400;color:#33475b;transform:scaleX(1.0468);">Open deal</span>
<span class="t" style="left:653.87px;top:644.80px;font-size:25px;font-weight:400;color:#506e91;transform:scaleX(0.9914);">Preview</span>
<span class="t" style="left:376.57px;top:965.70px;font-size:23.2px;font-weight:400;color:#ffffff;transform:scaleX(1.1255);">LJ</span>
<span class="t" style="left:946.65px;top:1476.10px;font-size:28.4px;font-weight:700;color:#9dadc5;transform:scaleX(1.0235);">Prev</span>
<span class="t" style="left:1038.30px;top:1476.10px;font-size:28.4px;font-weight:700;color:#3a8eac;transform:scaleX(0.8698);">1</span>
<span class="t" style="left:1080.56px;top:1476.10px;font-size:28.4px;font-weight:700;color:#9dadc5;transform:scaleX(1.0760);">Next</span>
<span class="t" style="left:1235.58px;top:1476.10px;font-size:28.4px;font-weight:700;color:#3a8eac;transform:scaleX(1.0605);">25 per page</span>
<span class="t" style="left:369.29px;top:652.40px;font-size:8px;font-weight:700;color:#e0703f;font-family:'Liberation Mono',monospace;transform:scaleX(0.9486);">CoreLogic</span>
<span class="t" style="left:376.49px;top:732.05px;font-size:9.5px;font-weight:700;color:#ffffff;transform:scaleX(0.8450);">BluePeak</span>
<span class="t" style="left:372.55px;top:1073.50px;font-size:4.6px;font-weight:700;color:#111111;transform:scaleX(1.0210);font-style:italic;letter-spacing:1.9px;">NEXAGEN</span>
</body></html>
